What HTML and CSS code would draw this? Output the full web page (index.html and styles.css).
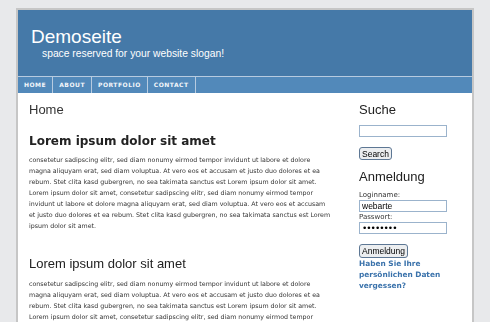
FILE: index.html
```html
<!DOCTYPE html>
<html lang="de">
<head>
    <meta charset="UTF-8">
    <title>Demoseite</title>
    <link rel="stylesheet" href="styles.css">
</head>
<body>

    <div class="wrap">
        <div class="header">
            <h1 class="site-title">Demoseite</h1>
            <p class="slogan">space reserved for your website slogan!</p>
        </div>

        <ul class="nav">
            <li><a href="#">HOME</a></li>
            <li><a href="#">ABOUT</a></li>
            <li><a href="#">PORTFOLIO</a></li>
            <li><a href="#">CONTACT</a></li>
        </ul>

        <div class="page">
            <div class="content">
                <div class="crumb">Home</div>

                <h2 class="big">Lorem ipsum dolor sit amet</h2>
                <p class="text">consetetur sadipscing elitr, sed diam nonumy eirmod tempor invidunt ut labore et dolore magna aliquyam erat, sed diam voluptua. At vero eos et accusam et justo duo dolores et ea rebum. Stet clita kasd gubergren, no sea takimata sanctus est Lorem ipsum dolor sit amet. Lorem ipsum dolor sit amet, consetetur sadipscing elitr, sed diam nonumy eirmod tempor invidunt ut labore et dolore magna aliquyam erat, sed diam voluptua. At vero eos et accusam et justo duo dolores et ea rebum. Stet clita kasd gubergren, no sea takimata sanctus est Lorem ipsum dolor sit amet.</p>

                <h3 class="sub">Lorem ipsum dolor sit amet</h3>
                <p class="text">consetetur sadipscing elitr, sed diam nonumy eirmod tempor invidunt ut labore et dolore magna aliquyam erat, sed diam voluptua. At vero eos et accusam et justo duo dolores et ea rebum. Stet clita kasd gubergren, no sea takimata sanctus est Lorem ipsum dolor sit amet. Lorem ipsum dolor sit amet, consetetur sadipscing elitr, sed diam nonumy eirmod tempor</p>
            </div>

            <div class="side">
                <h3 class="side-title">Suche</h3>
                <input class="field" type="text">
                <button class="btn">Search</button>

                <h3 class="side-title">Anmeldung</h3>
                <label class="lbl">Loginname:</label>
                <input class="field" type="text" value="webarte">
                <label class="lbl">Passwort:</label>
                <input class="field pass" type="password" value="12345678">
                <button class="btn btn-login">Anmeldung</button>
                <a class="forgot" href="#">Haben Sie Ihre persönlichen Daten vergessen?</a>
            </div>
        </div>
    </div>

</body>
</html>
```

FILE: styles.css
```css
body {
    margin: 0;
    padding: 8px 16px 0;
    background-color: #e8e9eb;
    font-family: "DejaVu Sans", Verdana, sans-serif;
    color: #333;
}

.wrap {
    width: 454px;
    height: 312px;
    overflow: hidden;
    border: 2px solid #c6c6c6;
    border-bottom: 0;
    background-color: #fff;
}

.header {
    background-color: #4579a8;
    height: 66px;
    padding-left: 13px;
    overflow: hidden;
}

.site-title {
    margin: 17px 0 0;
    font-family: "Liberation Sans", Arial, sans-serif;
    font-weight: normal;
    font-size: 19px;
    line-height: 20px;
    color: #fff;
}

.slogan {
    margin: 1px 0 0 11px;
    font-family: "Liberation Sans", Arial, sans-serif;
    font-size: 10.3px;
    color: #fff;
}

.nav {
    display: flex;
    margin: 0;
    padding: 0;
    list-style: none;
    height: 16px;
    border-top: 1px solid #b7cbe0;
    background-color: #5289ba;
}

.nav li {
    border-right: 1px solid #b7cbe0;
}

.nav a {
    display: block;
    padding: 0 6px;
    line-height: 16px;
    font-size: 6px;
    font-weight: bold;
    letter-spacing: 0.5px;
    color: #f4f7fb;
    text-decoration: none;
}

.page {
    display: flex;
    padding: 0 12px 0 11px;
    will-change: transform;
}

.content {
    width: 304px;
}

.side {
    margin-left: 26px;
    width: 100px;
}

.crumb {
    margin-top: 9px;
    font-family: "Liberation Sans", Arial, sans-serif;
    font-size: 13px;
    line-height: 16px;
}

.big {
    margin: 15px 0 5px;
    font-size: 12px;
    line-height: 16px;
    color: #222;
}

.text {
    margin: 0;
    font-size: 6.3px;
    line-height: 11px;
}

.sub {
    margin: 25px 0 6px;
    font-family: "Liberation Sans", Arial, sans-serif;
    font-weight: normal;
    font-size: 13px;
    line-height: 16px;
    color: #222;
}

.side-title {
    margin: 9px 0 7px;
    font-family: "Liberation Sans", Arial, sans-serif;
    font-weight: normal;
    font-size: 13px;
    line-height: 16px;
    color: #222;
}

.side-title + .lbl {
    margin-top: -2px;
}

.field {
    display: block;
    box-sizing: border-box;
    width: 88px;
    height: 12px;
    margin: 0;
    padding: 0 2px;
    border: 1px solid #9bb3cc;
    font-family: "Liberation Sans", Arial, sans-serif;
    font-size: 8.5px;
    color: #000;
}

.pass {
    font-family: "DejaVu Sans", sans-serif;
    font-size: 9px;
    letter-spacing: -1px;
}

.btn {
    display: block;
    margin: 10px 0 0;
    padding: 0 2px;
    height: 13px;
    border: 1px solid #5d7794;
    border-radius: 3px;
    background-color: #eceef0;
    font-family: "Liberation Sans", Arial, sans-serif;
    font-size: 8.5px;
    color: #000;
}

.lbl {
    display: block;
    font-size: 7px;
    line-height: 10px;
}

.btn-login {
    margin-top: 10px;
    height: 14px;
}

.forgot {
    display: block;
    margin-top: 0;
    font-size: 7.4px;
    font-weight: bold;
    line-height: 11px;
    color: #3a72ab;
    text-decoration: none;
}
```
